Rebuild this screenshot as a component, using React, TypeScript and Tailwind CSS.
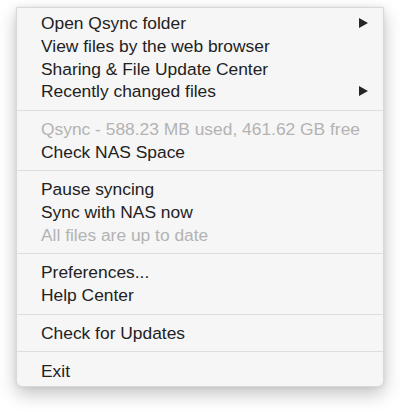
import React from "react";

type Item = { label: string; disabled?: boolean; submenu?: boolean };

const groups: Item[][] = [
  [
    { label: "Open Qsync folder", submenu: true },
    { label: "View files by the web browser" },
    { label: "Sharing & File Update Center" },
    { label: "Recently changed files", submenu: true },
  ],
  [
    { label: "Qsync - 588.23 MB used, 461.62 GB free", disabled: true },
    { label: "Check NAS Space" },
  ],
  [
    { label: "Pause syncing" },
    { label: "Sync with NAS now" },
    { label: "All files are up to date", disabled: true },
  ],
  [{ label: "Preferences..." }, { label: "Help Center" }],
  [{ label: "Check for Updates" }],
  [{ label: "Exit" }],
];

function Arrow() {
  return (
    <svg width="9" height="10" viewBox="0 0 9 10" className="fill-[#262626]">
      <path d="M0 0 L9 5 L0 10 Z" />
    </svg>
  );
}

function Row({ item }: { item: Item }) {
  return (
    <div
      className={`flex h-[22.7px] items-center justify-between pl-[24px] pr-[15px] ${
        item.disabled ? "text-[#b3b3b3]" : "text-[#222222]"
      }`}
    >
      <span className="whitespace-nowrap">{item.label}</span>
      {item.submenu && <Arrow />}
    </div>
  );
}

export default function App() {
  return (
    <div className="min-h-[412px] w-[403px] bg-white pt-[7px] pl-[16px]">
      <div
        className="w-[368px] rounded-b-[6px] border border-[#d9d9d9] bg-[#f6f6f6] py-[4px] text-[17.4px] shadow-[0_7px_18px_rgba(0,0,0,0.24),0_0_4px_rgba(0,0,0,0.08)]"
        style={{ fontFamily: '"Liberation Sans", Arial, sans-serif' }}
      >
        {groups.map((g, gi) => (
          <div key={gi}>
            {gi > 0 && (
              <div className="py-[7px]">
                <div className="h-px bg-[#dedede]" />
              </div>
            )}
            {g.map((it) => (
              <Row key={it.label} item={it} />
            ))}
          </div>
        ))}
      </div>
    </div>
  );
}
